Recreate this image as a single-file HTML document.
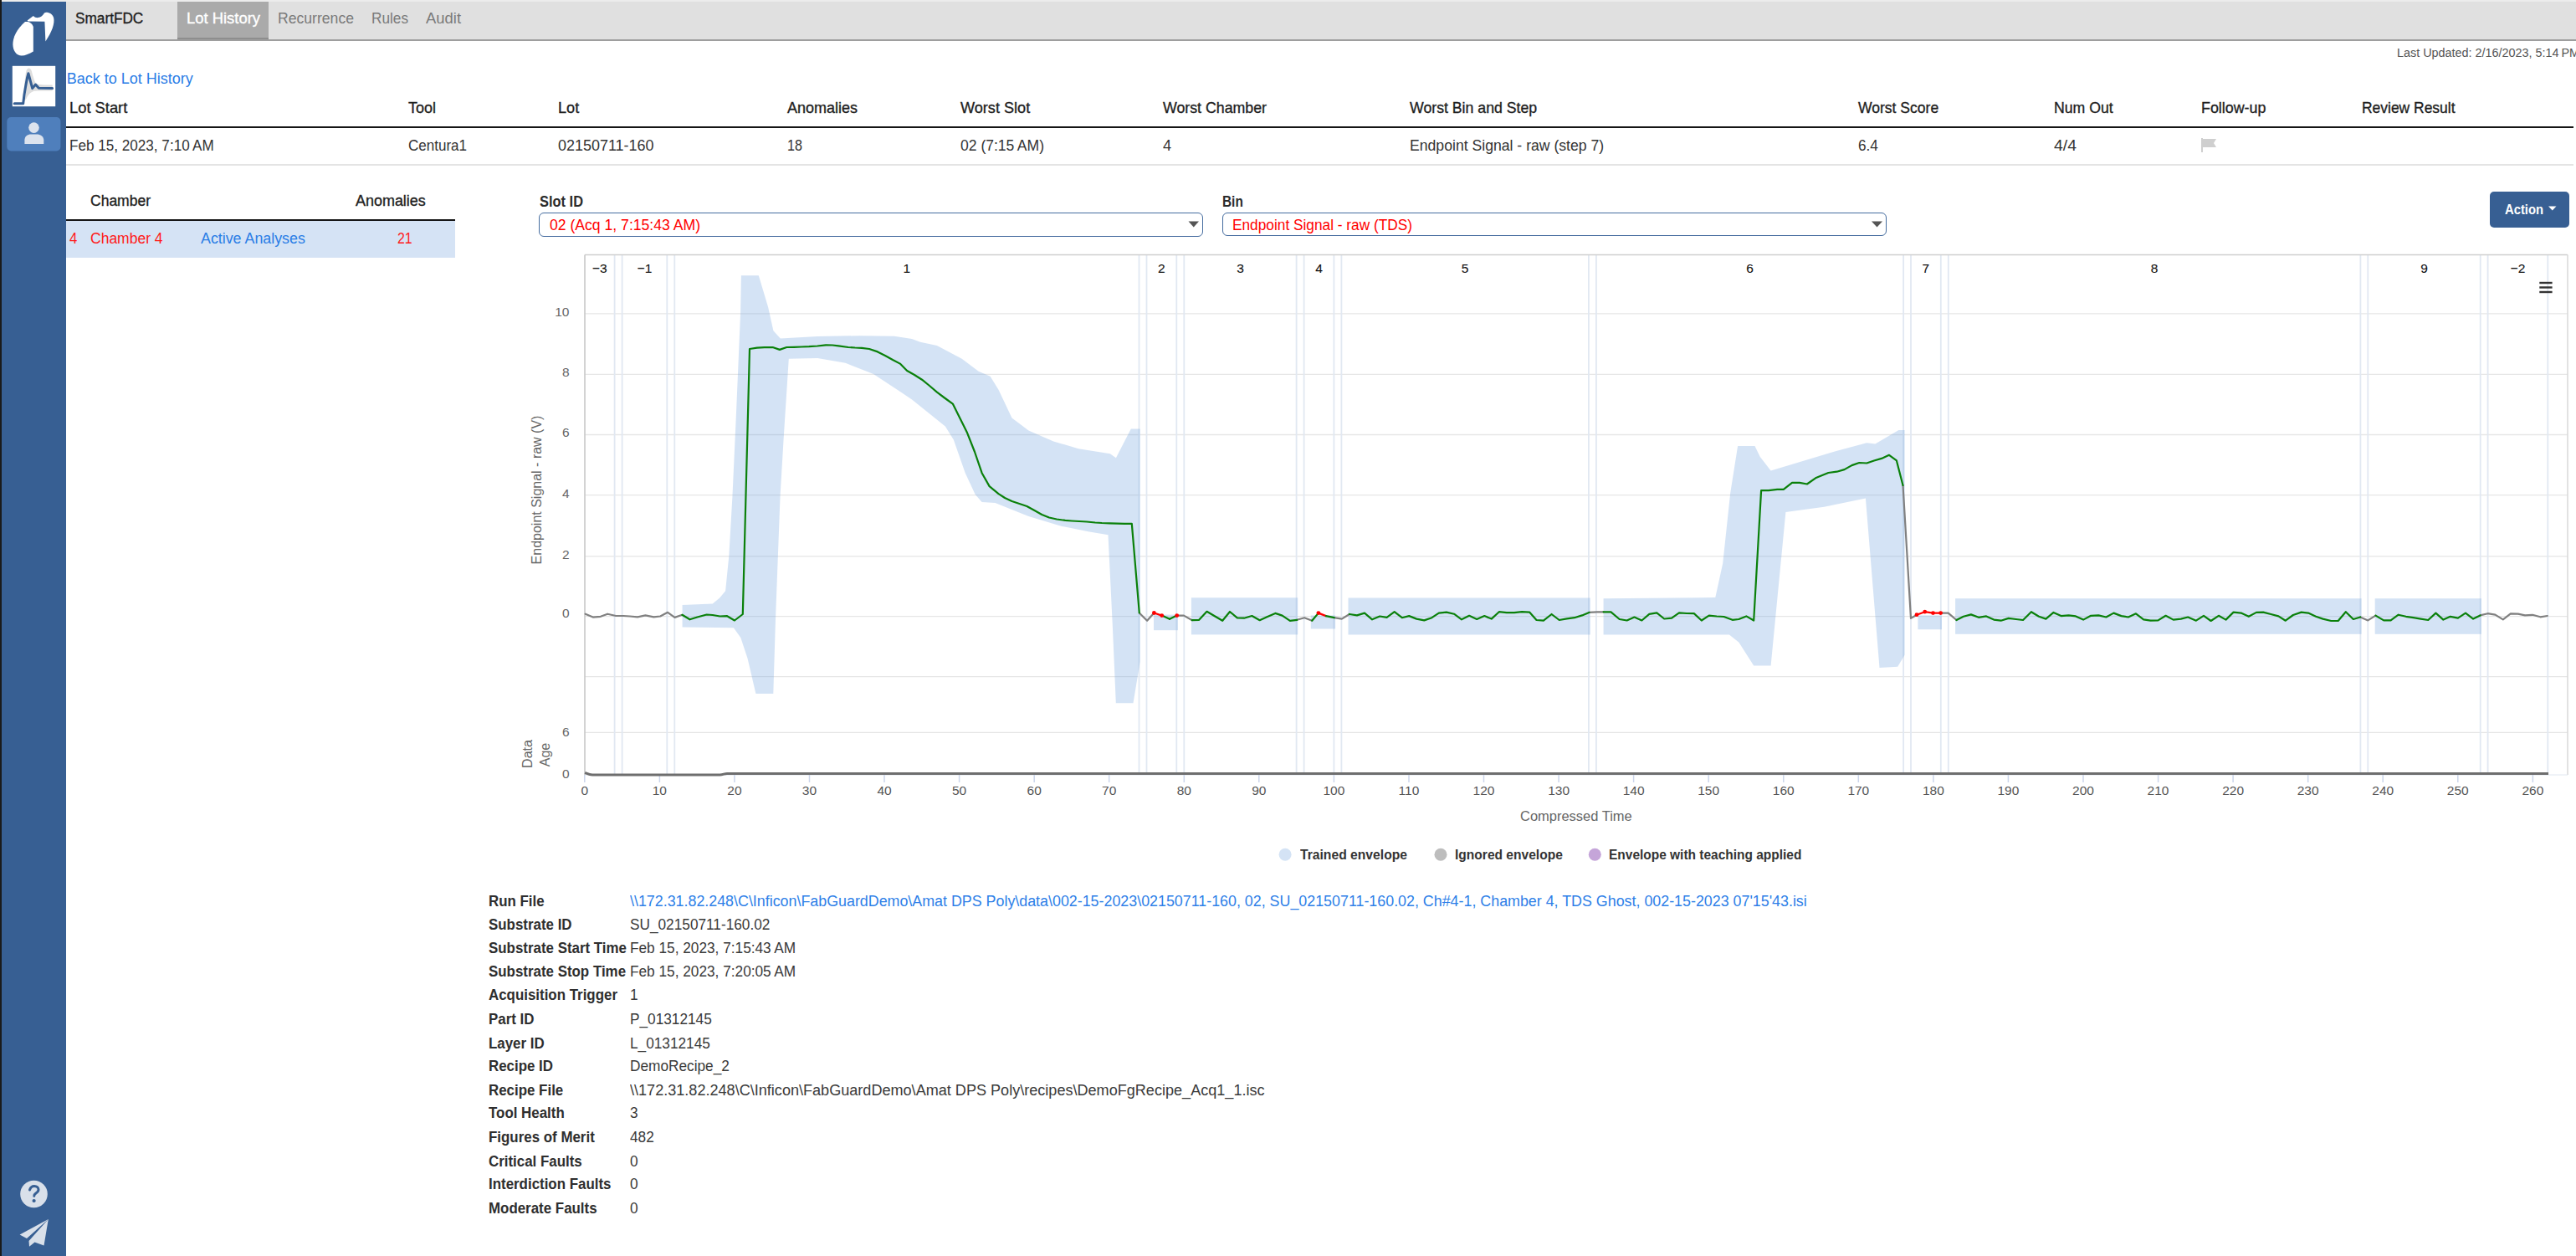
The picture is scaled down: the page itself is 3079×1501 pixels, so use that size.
<!DOCTYPE html>
<html><head><meta charset="utf-8"><title>SmartFDC</title>
<style>
html,body{margin:0;padding:0;}
body{width:3079px;height:1501px;overflow:hidden;position:relative;background:#fff;font-family:"Liberation Sans", sans-serif;}
.t{position:absolute;white-space:nowrap;transform-origin:0 0;}
.b{position:absolute;}
</style></head><body>
<div class="b" style="left:0;top:0;width:3079px;height:2px;background:#ececec"></div>
<div class="b" style="left:0;top:0;width:2px;height:1501px;background:#1a1a1a"></div>
<div class="b" style="left:2px;top:2px;width:77px;height:1499px;background:#375f93"></div>
<div class="b" style="left:79px;top:2px;width:3000px;height:45px;background:#e0e0e0"></div>
<div class="b" style="left:79px;top:46.5px;width:3000px;height:2px;background:#9e9e9e"></div>
<div class="b" style="left:212px;top:2px;width:109px;height:45px;background:#aaaaaa"></div>
<div class="b" style="left:212px;top:45px;width:109px;height:2px;background:#8e8e8e"></div>
<div class="b" style="left:79px;top:151px;width:2997px;height:1.7px;background:#151515"></div>
<div class="b" style="left:79px;top:196px;width:2997px;height:1.5px;background:#e4e4e4"></div>
<div class="b" style="left:79px;top:262.2px;width:465px;height:1.7px;background:#151515"></div>
<div class="b" style="left:79px;top:264px;width:465px;height:43.6px;background:#d5e3f5"></div>
<div class="b" style="left:643.8px;top:254.2px;width:794.6px;height:28.4px;box-sizing:border-box;border:1.6px solid #456c9f;border-radius:6px"></div>
<div class="b" style="left:1460.6px;top:254.4px;width:794.6px;height:28px;box-sizing:border-box;border:1.6px solid #456c9f;border-radius:6px"></div>
<div class="b" style="left:2976px;top:228.5px;width:95.3px;height:43px;background:#375f93;border-radius:5px"></div>
<svg class="b" style="left:0;top:0" width="80" height="1501" viewBox="0 0 80 1501">
<path d="M30,26.1 C34,25.3 38,27 39.8,32 L39.8,61.6 C35,64.5 30,66.6 25.8,66.6 C20,66.6 15.4,61 15.4,53 C15.4,45 19.5,35.5 30,26.1 Z" fill="#fff"/>
<path d="M32.6,24.6 L39.8,19 C41.5,20.8 43.5,21.3 45.8,21.1 C48.5,20.8 51,18.5 53,15.4 C54,14.8 55,14.6 56,14.7 C60,15 63.2,17.5 64.2,21.5 C65.5,28 62.5,37.5 54.4,49.4 L53.4,25.8 L33.7,25.6 Z" fill="#fff"/>
<rect x="14.8" y="78.8" width="51.4" height="48.4" fill="#fff"/>
<path d="M27,123 C28.5,112 29.5,92 31.5,84.5 C32.8,80.5 36,80.5 37.5,84 C39,89 40.5,96 43,99.8 C46,101.5 52,101.6 62.8,101.6 L62.8,108.6 C52,108.6 45,108.3 41.5,108.8 C37.5,109.5 34.5,112 31.5,118 Z" fill="#dedede"/>
<polyline points="17.2,123.7 27.7,123.7 29,113 30.5,104 32.5,93 33.9,87.7 38.7,105.6 42.5,101 46.3,105.3 62.6,105.6" fill="none" stroke="#375f93" stroke-width="3" stroke-linejoin="round" stroke-linecap="round"/>
<rect x="8.3" y="140" width="64.1" height="40.5" rx="5" fill="#4f7fbc"/>
<circle cx="40.5" cy="152.6" r="6.3" fill="#dce3ee"/>
<path d="M29.4,172 L29.4,167.5 C29.4,163 33,160.5 37,160.5 L44,160.5 C48,160.5 52.3,163 52.3,167.5 L52.3,172 Z" fill="#dce3ee"/>
<circle cx="40.5" cy="1427" r="16.3" fill="#d9e0ea"/>
<path d="M35.5,1422 C36.5,1418.8 38.5,1417.5 41,1417.5 C44,1417.5 46,1419.3 46,1421.8 C46,1424.3 43.8,1425.5 42.3,1426.5 C41.3,1427.2 40.8,1428 40.8,1429.3" fill="none" stroke="#375f93" stroke-width="3" stroke-linecap="round"/>
<circle cx="40.6" cy="1435" r="2.1" fill="#375f93"/>
<path d="M57.8,1457 L23.6,1475.5 L32,1480 Z" fill="#d9e0ea"/>
<path d="M57.8,1457 L34.5,1483 L35,1489.8 L41.5,1484.5 L52.5,1488.5 Z" fill="#d9e0ea"/>
</svg>
<svg class="b" style="left:0;top:0" width="3079" height="1501" viewBox="0 0 3079 1501">
<line x1="699" y1="374.9" x2="3069" y2="374.9" stroke="#e6e6e6" stroke-width="1.3"/>
<line x1="699" y1="447.3" x2="3069" y2="447.3" stroke="#e6e6e6" stroke-width="1.3"/>
<line x1="699" y1="519.5" x2="3069" y2="519.5" stroke="#e6e6e6" stroke-width="1.3"/>
<line x1="699" y1="591.7" x2="3069" y2="591.7" stroke="#e6e6e6" stroke-width="1.3"/>
<line x1="699" y1="664.8" x2="3069" y2="664.8" stroke="#e6e6e6" stroke-width="1.3"/>
<line x1="699" y1="736.6" x2="3069" y2="736.6" stroke="#e6e6e6" stroke-width="1.3"/>
<line x1="699" y1="808.7" x2="3069" y2="808.7" stroke="#e6e6e6" stroke-width="1.3"/>
<line x1="699" y1="875.3" x2="3069" y2="875.3" stroke="#e6e6e6" stroke-width="1.3"/>
<line x1="734.6" y1="304.5" x2="734.6" y2="926" stroke="#e1e8f2" stroke-width="1.8"/>
<line x1="743.6" y1="304.5" x2="743.6" y2="926" stroke="#e1e8f2" stroke-width="1.8"/>
<line x1="797.3" y1="304.5" x2="797.3" y2="926" stroke="#e1e8f2" stroke-width="1.8"/>
<line x1="806.3" y1="304.5" x2="806.3" y2="926" stroke="#e1e8f2" stroke-width="1.8"/>
<line x1="1361.5" y1="304.5" x2="1361.5" y2="926" stroke="#e1e8f2" stroke-width="1.8"/>
<line x1="1370.5" y1="304.5" x2="1370.5" y2="926" stroke="#e1e8f2" stroke-width="1.8"/>
<line x1="1406.3" y1="304.5" x2="1406.3" y2="926" stroke="#e1e8f2" stroke-width="1.8"/>
<line x1="1415.3" y1="304.5" x2="1415.3" y2="926" stroke="#e1e8f2" stroke-width="1.8"/>
<line x1="1549.6" y1="304.5" x2="1549.6" y2="926" stroke="#e1e8f2" stroke-width="1.8"/>
<line x1="1558.6" y1="304.5" x2="1558.6" y2="926" stroke="#e1e8f2" stroke-width="1.8"/>
<line x1="1594.4" y1="304.5" x2="1594.4" y2="926" stroke="#e1e8f2" stroke-width="1.8"/>
<line x1="1603.4" y1="304.5" x2="1603.4" y2="926" stroke="#e1e8f2" stroke-width="1.8"/>
<line x1="1898.9" y1="304.5" x2="1898.9" y2="926" stroke="#e1e8f2" stroke-width="1.8"/>
<line x1="1907.9" y1="304.5" x2="1907.9" y2="926" stroke="#e1e8f2" stroke-width="1.8"/>
<line x1="2275.1" y1="304.5" x2="2275.1" y2="926" stroke="#e1e8f2" stroke-width="1.8"/>
<line x1="2284.0" y1="304.5" x2="2284.0" y2="926" stroke="#e1e8f2" stroke-width="1.8"/>
<line x1="2319.8" y1="304.5" x2="2319.8" y2="926" stroke="#e1e8f2" stroke-width="1.8"/>
<line x1="2328.8" y1="304.5" x2="2328.8" y2="926" stroke="#e1e8f2" stroke-width="1.8"/>
<line x1="2821.4" y1="304.5" x2="2821.4" y2="926" stroke="#e1e8f2" stroke-width="1.8"/>
<line x1="2830.3" y1="304.5" x2="2830.3" y2="926" stroke="#e1e8f2" stroke-width="1.8"/>
<line x1="2964.7" y1="304.5" x2="2964.7" y2="926" stroke="#e1e8f2" stroke-width="1.8"/>
<line x1="2973.6" y1="304.5" x2="2973.6" y2="926" stroke="#e1e8f2" stroke-width="1.8"/>
<line x1="3045.3" y1="304.5" x2="3045.3" y2="926" stroke="#e1e8f2" stroke-width="1.8"/>
<polygon points="815.6,723.0 851.8,721.6 860.2,714.6 867.1,706.3 871.3,664.5 875.5,592.0 879.7,500.0 885.1,373.6 885.9,329.2 906.8,329.2 918.1,366.9 924.4,395.3 932.8,404.5 977.1,402.0 1027.3,401.2 1069.0,401.7 1090.0,404.9 1100.0,408.7 1119.9,412.9 1149.7,428.8 1169.6,443.8 1183.6,449.7 1193.5,465.7 1209.5,499.5 1229.4,514.4 1259.2,527.4 1289.1,536.3 1326.9,542.3 1333.9,547.3 1351.8,512.4 1362.7,512.4 1362.7,790.5 1354.5,840.2 1333.8,840.2 1329.7,745.0 1324.5,639.3 1300.7,635.2 1280.0,631.0 1269.2,628.9 1229.4,617.0 1189.5,601.0 1173.6,600.0 1165.7,591.1 1153.7,565.2 1139.8,525.4 1129.8,509.4 1090.0,477.6 1077.4,468.9 1044.0,447.1 1010.5,433.8 977.1,427.9 942.8,428.7 936.9,520.0 932.6,592.0 927.1,737.0 924.3,828.9 903.4,828.9 893.6,787.1 885.3,762.0 876.9,750.3 815.6,749.5" fill="#70a2de" fill-opacity="0.3"/>
<polygon points="1916.6,715.3 2050.3,714.0 2059.2,673.2 2068.2,589.2 2077.1,533.1 2097.5,533.1 2103.8,545.9 2116.6,562.4 2154.8,551.0 2193.0,539.5 2231.2,529.3 2241.4,530.6 2269.4,514.0 2276.6,514.0 2276.6,782.8 2268.2,796.8 2246.5,798.1 2229.9,595.5 2180.3,605.7 2134.4,612.1 2116.6,795.5 2096.2,795.5 2078.3,767.5 2066.9,758.6 1916.6,758.6" fill="#70a2de" fill-opacity="0.3"/>
<rect x="1379" y="734.6" width="29.0" height="18.6" fill="#70a2de" fill-opacity="0.3"/>
<rect x="1423.9" y="714.3" width="127.3" height="44.1" fill="#70a2de" fill-opacity="0.3"/>
<rect x="1566.8" y="735.4" width="29.3" height="16.1" fill="#70a2de" fill-opacity="0.3"/>
<rect x="1611.5" y="714.5" width="289.3" height="44.0" fill="#70a2de" fill-opacity="0.3"/>
<rect x="2292.4" y="735.4" width="28.6" height="16.8" fill="#70a2de" fill-opacity="0.3"/>
<rect x="2337.1" y="715.2" width="485.5" height="42.6" fill="#70a2de" fill-opacity="0.3"/>
<rect x="2838.7" y="715.2" width="127.2" height="42.6" fill="#70a2de" fill-opacity="0.3"/>
<line x1="699" y1="304.5" x2="3069" y2="304.5" stroke="#d0d0d0" stroke-width="1.5"/>
<line x1="3069" y1="304.5" x2="3069" y2="926" stroke="#d8d8d8" stroke-width="1.5"/>
<line x1="699" y1="926" x2="3069" y2="926" stroke="#e0e6f0" stroke-width="1"/>
<line x1="699" y1="304.5" x2="699" y2="926" stroke="#c8c8c8" stroke-width="1.6"/>
<line x1="698.8" y1="926" x2="698.8" y2="935" stroke="#ccd6eb" stroke-width="1.5"/>
<line x1="788.4" y1="926" x2="788.4" y2="935" stroke="#ccd6eb" stroke-width="1.5"/>
<line x1="877.9" y1="926" x2="877.9" y2="935" stroke="#ccd6eb" stroke-width="1.5"/>
<line x1="967.5" y1="926" x2="967.5" y2="935" stroke="#ccd6eb" stroke-width="1.5"/>
<line x1="1057.0" y1="926" x2="1057.0" y2="935" stroke="#ccd6eb" stroke-width="1.5"/>
<line x1="1146.6" y1="926" x2="1146.6" y2="935" stroke="#ccd6eb" stroke-width="1.5"/>
<line x1="1236.2" y1="926" x2="1236.2" y2="935" stroke="#ccd6eb" stroke-width="1.5"/>
<line x1="1325.7" y1="926" x2="1325.7" y2="935" stroke="#ccd6eb" stroke-width="1.5"/>
<line x1="1415.3" y1="926" x2="1415.3" y2="935" stroke="#ccd6eb" stroke-width="1.5"/>
<line x1="1504.8" y1="926" x2="1504.8" y2="935" stroke="#ccd6eb" stroke-width="1.5"/>
<line x1="1594.4" y1="926" x2="1594.4" y2="935" stroke="#ccd6eb" stroke-width="1.5"/>
<line x1="1684.0" y1="926" x2="1684.0" y2="935" stroke="#ccd6eb" stroke-width="1.5"/>
<line x1="1773.5" y1="926" x2="1773.5" y2="935" stroke="#ccd6eb" stroke-width="1.5"/>
<line x1="1863.1" y1="926" x2="1863.1" y2="935" stroke="#ccd6eb" stroke-width="1.5"/>
<line x1="1952.6" y1="926" x2="1952.6" y2="935" stroke="#ccd6eb" stroke-width="1.5"/>
<line x1="2042.2" y1="926" x2="2042.2" y2="935" stroke="#ccd6eb" stroke-width="1.5"/>
<line x1="2131.8" y1="926" x2="2131.8" y2="935" stroke="#ccd6eb" stroke-width="1.5"/>
<line x1="2221.3" y1="926" x2="2221.3" y2="935" stroke="#ccd6eb" stroke-width="1.5"/>
<line x1="2310.9" y1="926" x2="2310.9" y2="935" stroke="#ccd6eb" stroke-width="1.5"/>
<line x1="2400.4" y1="926" x2="2400.4" y2="935" stroke="#ccd6eb" stroke-width="1.5"/>
<line x1="2490.0" y1="926" x2="2490.0" y2="935" stroke="#ccd6eb" stroke-width="1.5"/>
<line x1="2579.6" y1="926" x2="2579.6" y2="935" stroke="#ccd6eb" stroke-width="1.5"/>
<line x1="2669.1" y1="926" x2="2669.1" y2="935" stroke="#ccd6eb" stroke-width="1.5"/>
<line x1="2758.7" y1="926" x2="2758.7" y2="935" stroke="#ccd6eb" stroke-width="1.5"/>
<line x1="2848.2" y1="926" x2="2848.2" y2="935" stroke="#ccd6eb" stroke-width="1.5"/>
<line x1="2937.8" y1="926" x2="2937.8" y2="935" stroke="#ccd6eb" stroke-width="1.5"/>
<line x1="3027.4" y1="926" x2="3027.4" y2="935" stroke="#ccd6eb" stroke-width="1.5"/>
<polyline points="699.7,733.7 708.7,737.6 717.9,736.8 726.2,733.7 736.2,736.0 745.2,736.0 752.9,736.5 761.9,737.3 771.4,735.4 781.4,737.3 789.2,736.5 798.1,731.8 806.5,737.9 815.4,734.8" fill="none" stroke="#808080" stroke-width="2.2" stroke-linejoin="round" stroke-linecap="round"/>
<polyline points="1361.8,732.5 1371.1,741.8 1379.4,732.5" fill="none" stroke="#808080" stroke-width="2.2" stroke-linejoin="round" stroke-linecap="round"/>
<polyline points="1406.7,735.6 1415.0,735.6 1424.9,741.2" fill="none" stroke="#808080" stroke-width="2.2" stroke-linejoin="round" stroke-linecap="round"/>
<polyline points="1550.2,740.8 1559.1,738.2 1568.2,741.7" fill="none" stroke="#808080" stroke-width="2.2" stroke-linejoin="round" stroke-linecap="round"/>
<polyline points="1594.7,738.2 1603.8,739.6 1612.9,734.0" fill="none" stroke="#808080" stroke-width="2.2" stroke-linejoin="round" stroke-linecap="round"/>
<polyline points="1899.4,731.9 1908.9,731.3 1916.6,731.3" fill="none" stroke="#808080" stroke-width="2.2" stroke-linejoin="round" stroke-linecap="round"/>
<polyline points="2274.5,580.0 2284.0,738.9 2291.0,734.7" fill="none" stroke="#808080" stroke-width="2.2" stroke-linejoin="round" stroke-linecap="round"/>
<polyline points="2319.6,732.6 2328.7,732.6 2338.5,741.0" fill="none" stroke="#808080" stroke-width="2.2" stroke-linejoin="round" stroke-linecap="round"/>
<polyline points="2821.2,737.5 2830.3,741.4 2839.5,735.6" fill="none" stroke="#808080" stroke-width="2.2" stroke-linejoin="round" stroke-linecap="round"/>
<polyline points="2964.5,735.4 2973.4,733.2 2982.4,734.6 2991.8,740.4 3000.8,733.4 3009.7,733.7 3018.0,735.4 3027.0,734.8 3036.4,737.3 3044.8,736.0" fill="none" stroke="#808080" stroke-width="2.2" stroke-linejoin="round" stroke-linecap="round"/>
<polyline points="815.4,734.8 824.5,740.3 833.5,737.5 844.6,734.5 851.8,735.0 860.5,736.5 869.1,736.2 878.0,741.5 887.8,734.0 896.0,417.0 904.8,415.7 913.7,415.2 923.6,415.0 931.9,417.9 940.3,415.0 949.0,414.8 958.0,414.5 967.0,414.2 977.0,413.5 987.1,412.4 995.0,412.5 1002.2,413.4 1013.9,415.0 1022.0,415.5 1030.0,415.8 1039.0,417.0 1049.0,420.4 1058.0,425.0 1067.0,430.0 1075.8,434.6 1084.1,443.0 1093.0,448.0 1102.0,453.7 1111.0,461.0 1119.9,468.6 1129.0,475.5 1138.8,482.6 1147.0,499.0 1155.7,516.4 1165.0,540.0 1173.6,565.2 1182.6,581.1 1193.5,590.1 1201.0,595.0 1209.5,599.0 1218.5,602.0 1227.4,605.0 1236.5,610.0 1245.3,615.0 1254.0,618.5 1263.0,620.5 1273.2,621.9 1281.0,622.5 1290.0,623.0 1299.0,623.5 1309.0,624.5 1317.0,625.0 1326.0,625.3 1335.0,625.6 1344.0,625.8 1352.8,625.9 1361.8,732.5" fill="none" stroke="#0a800a" stroke-width="2.2" stroke-linejoin="round" stroke-linecap="round"/>
<polyline points="1424.9,741.2 1433.2,740.8 1442.5,730.8 1451.8,736.3 1461.2,741.8 1470.0,731.0 1478.8,738.3 1487.0,738.7 1496.4,736.0 1505.7,741.2 1515.0,737.0 1524.3,732.9 1532.6,735.6 1541.9,741.8 1550.2,740.8" fill="none" stroke="#0a800a" stroke-width="2.2" stroke-linejoin="round" stroke-linecap="round"/>
<polyline points="1612.9,734.0 1622.0,735.4 1631.0,732.6 1640.1,740.3 1649.2,736.5 1657.6,737.9 1666.7,731.2 1675.8,738.2 1684.2,736.1 1693.2,739.6 1702.3,741.4 1711.4,738.2 1719.8,732.6 1728.9,731.6 1738.0,733.7 1747.0,740.3 1756.1,735.8 1765.2,740.0 1774.3,736.1 1782.7,739.6 1791.8,731.2 1800.8,732.2 1809.9,732.2 1819.0,731.2 1828.1,731.6 1836.5,741.0 1844.9,741.7 1854.6,734.0 1863.7,741.0 1872.8,739.3 1881.9,738.2 1891.0,735.4 1899.4,731.9" fill="none" stroke="#0a800a" stroke-width="2.2" stroke-linejoin="round" stroke-linecap="round"/>
<polyline points="1916.6,731.3 1925.5,731.3 1935.7,740.0 1944.6,741.5 1953.5,737.5 1962.4,741.5 1971.3,733.9 1980.3,732.4 1989.2,739.5 1998.1,738.7 2007.0,732.4 2016.0,733.0 2024.8,733.1 2033.8,741.5 2042.7,735.7 2051.9,736.5 2060.5,737.0 2070.7,740.8 2078.3,740.0 2087.3,736.4 2096.2,741.5 2105.1,586.1 2114.0,586.1 2124.2,584.8 2131.8,584.8 2142.0,576.9 2151.0,576.9 2159.9,578.5 2170.1,571.3 2178.0,568.0 2185.4,565.0 2195.5,563.7 2204.5,561.1 2213.4,556.1 2222.3,553.0 2231.2,553.5 2240.0,550.5 2249.0,547.9 2258.0,543.8 2266.9,550.4 2274.5,580.0" fill="none" stroke="#0a800a" stroke-width="2.2" stroke-linejoin="round" stroke-linecap="round"/>
<polyline points="2338.5,741.0 2346.9,736.8 2355.9,734.4 2365.0,737.8 2374.1,736.4 2383.2,740.6 2391.6,741.7 2400.7,738.9 2409.7,740.0 2418.1,741.0 2427.9,731.2 2437.0,736.8 2445.4,739.6 2454.5,731.9 2463.5,736.1 2472.6,735.4 2481.0,736.4 2490.1,740.6 2499.2,735.8 2508.3,735.4 2517.4,737.5 2526.4,732.6 2535.5,736.1 2543.9,737.5 2553.0,733.3 2562.1,740.3 2570.5,741.7 2579.5,741.4 2588.6,735.8 2597.7,740.6 2606.8,739.6 2615.2,737.5 2624.9,741.7 2634.0,735.8 2642.6,742.0 2651.9,735.8 2660.5,740.6 2669.6,731.6 2678.7,732.6 2687.8,736.8 2696.9,731.9 2705.2,731.6 2714.3,734.0 2723.4,736.4 2731.8,741.7 2740.9,735.0 2750.7,731.6 2759.0,732.6 2768.1,736.8 2776.5,739.6 2786.3,742.0 2794.7,742.0 2803.8,731.2 2812.8,740.0 2821.2,737.5" fill="none" stroke="#0a800a" stroke-width="2.2" stroke-linejoin="round" stroke-linecap="round"/>
<polyline points="2839.5,735.6 2849.2,741.4 2857.6,741.4 2866.7,734.7 2875.7,736.8 2884.7,738.2 2893.6,739.6 2902.3,741.0 2911.4,732.6 2920.4,740.6 2928.8,736.8 2937.9,738.6 2947.0,732.6 2956.1,739.6 2964.5,735.4" fill="none" stroke="#0a800a" stroke-width="2.2" stroke-linejoin="round" stroke-linecap="round"/>
<polyline points="1379.4,732.5 1388.7,735.6" fill="none" stroke="#ff0000" stroke-width="2.2" stroke-linejoin="round" stroke-linecap="round"/>
<polyline points="1388.7,735.6 1398.0,739.8" fill="none" stroke="#0a800a" stroke-width="2.2" stroke-linejoin="round" stroke-linecap="round"/>
<polyline points="1398.0,739.8 1406.7,735.6" fill="none" stroke="#0a800a" stroke-width="2.2" stroke-linejoin="round" stroke-linecap="round"/>
<polyline points="1568.2,741.7 1575.9,732.6" fill="none" stroke="#0a800a" stroke-width="2.2" stroke-linejoin="round" stroke-linecap="round"/>
<polyline points="1575.9,732.6 1584.9,736.1" fill="none" stroke="#ff0000" stroke-width="2.2" stroke-linejoin="round" stroke-linecap="round"/>
<polyline points="1584.9,736.1 1594.7,738.2" fill="none" stroke="#0a800a" stroke-width="2.2" stroke-linejoin="round" stroke-linecap="round"/>
<polyline points="2291.0,734.7 2300.7,731.2 2310.5,732.6 2319.6,732.6" fill="none" stroke="#ff0000" stroke-width="2.2" stroke-linejoin="round" stroke-linecap="round"/>
<circle cx="1379.4" cy="732.5" r="2.4" fill="#ff0000"/>
<circle cx="1388.7" cy="735.6" r="2.4" fill="#ff0000"/>
<circle cx="1406.7" cy="735.6" r="2.4" fill="#ff0000"/>
<circle cx="1575.9" cy="732.6" r="2.4" fill="#ff0000"/>
<circle cx="2291" cy="734.7" r="2.4" fill="#ff0000"/>
<circle cx="2300.7" cy="731.2" r="2.4" fill="#ff0000"/>
<circle cx="2310.5" cy="732.6" r="2.4" fill="#ff0000"/>
<circle cx="2319.6" cy="732.6" r="2.4" fill="#ff0000"/>
<path d="M699.2,923.3 C702,924.5 705,926 708,926 L860.6,926 C864,926 866,924.4 869,924.4 L3046,924.4" fill="none" stroke="#6e6e6e" stroke-width="3"/>
<rect x="3035.3" y="336.8" width="15.3" height="2.4" fill="#333"/>
<rect x="3035.3" y="342.3" width="15.3" height="2.4" fill="#333"/>
<rect x="3035.3" y="347.8" width="15.3" height="2.4" fill="#333"/>
<circle cx="1536.1" cy="1021.2" r="7.5" fill="#d4e3f5"/>
<circle cx="1722" cy="1021.2" r="7.5" fill="#bdbdbd"/>
<circle cx="1906.3" cy="1021.2" r="7.5" fill="#c5a5d9"/>
<polygon points="1420.5,264.5 1433,264.5 1426.75,271.5" fill="#555"/>
<polygon points="2237,264.5 2250,264.5 2243.5,271.5" fill="#555"/>
<polygon points="3046,246.5 3055.5,246.5 3050.75,251.5" fill="#fff"/>
<path d="M2631,165 L2633,165 L2633,182 L2631,182 Z M2633,166 L2649,166 L2646,171 L2649,176 L2633,176 Z" fill="#cfcfcf"/>
<text x="0" y="0" transform="translate(646.5,585.5) rotate(-90)" text-anchor="middle" font-family="Liberation Sans" font-size="16" fill="#666">Endpoint Signal - raw (V)</text>
<text x="0" y="0" transform="translate(635.8,901) rotate(-90)" text-anchor="middle" font-family="Liberation Sans" font-size="16" fill="#666">Data</text>
<text x="0" y="0" transform="translate(656.6,902) rotate(-90)" text-anchor="middle" font-family="Liberation Sans" font-size="16" fill="#666">Age</text>
</svg>
<div class="t" style="left:89.50px;top:13.90px;font-size:17.6px;line-height:17.6px;color:#1f1f1f;-webkit-text-stroke:0.35px #1f1f1f;transform:scaleX(0.9784);">SmartFDC</div><div class="t" style="left:223.00px;top:13.34px;font-size:18.5px;line-height:18.5px;color:#ffffff;-webkit-text-stroke:0.35px #ffffff;transform:scaleX(0.9952);">Lot History</div><div class="t" style="left:332.00px;top:13.34px;font-size:18.5px;line-height:18.5px;color:#7a7a7a;transform:scaleX(0.9515);">Recurrence</div><div class="t" style="left:444.00px;top:13.34px;font-size:18.5px;line-height:18.5px;color:#7a7a7a;transform:scaleX(0.9300);">Rules</div><div class="t" style="left:509.00px;top:13.34px;font-size:18.5px;line-height:18.5px;color:#7a7a7a;transform:scaleX(0.9959);">Audit</div><div class="t" style="left:2864.70px;top:54.68px;font-size:15.5px;line-height:15.5px;color:#555;transform:scaleX(0.9280);">Last Updated: 2/16/2023, 5:14 PM</div><div class="t" style="left:79.70px;top:84.56px;font-size:18px;line-height:18px;color:#2a7de6;">Back to Lot History</div><div class="t" style="left:83.20px;top:119.64px;font-size:18.5px;line-height:18.5px;color:#1f1f1f;-webkit-text-stroke:0.35px #1f1f1f;transform:scaleX(0.9909);">Lot Start</div><div class="t" style="left:488.30px;top:119.64px;font-size:18.5px;line-height:18.5px;color:#1f1f1f;-webkit-text-stroke:0.35px #1f1f1f;transform:scaleX(0.9719);">Tool</div><div class="t" style="left:666.80px;top:119.64px;font-size:18.5px;line-height:18.5px;color:#1f1f1f;-webkit-text-stroke:0.35px #1f1f1f;transform:scaleX(0.9798);">Lot</div><div class="t" style="left:941.40px;top:119.64px;font-size:18.5px;line-height:18.5px;color:#1f1f1f;-webkit-text-stroke:0.35px #1f1f1f;transform:scaleX(0.9723);">Anomalies</div><div class="t" style="left:1147.50px;top:119.64px;font-size:18.5px;line-height:18.5px;color:#1f1f1f;-webkit-text-stroke:0.35px #1f1f1f;transform:scaleX(0.9790);">Worst Slot</div><div class="t" style="left:1390.00px;top:119.64px;font-size:18.5px;line-height:18.5px;color:#1f1f1f;-webkit-text-stroke:0.35px #1f1f1f;transform:scaleX(0.9597);">Worst Chamber</div><div class="t" style="left:1684.80px;top:119.64px;font-size:18.5px;line-height:18.5px;color:#1f1f1f;-webkit-text-stroke:0.35px #1f1f1f;transform:scaleX(0.9569);">Worst Bin and Step</div><div class="t" style="left:2220.80px;top:119.64px;font-size:18.5px;line-height:18.5px;color:#1f1f1f;-webkit-text-stroke:0.35px #1f1f1f;transform:scaleX(0.9484);">Worst Score</div><div class="t" style="left:2455.30px;top:119.64px;font-size:18.5px;line-height:18.5px;color:#1f1f1f;-webkit-text-stroke:0.35px #1f1f1f;transform:scaleX(0.9550);">Num Out</div><div class="t" style="left:2630.60px;top:119.64px;font-size:18.5px;line-height:18.5px;color:#1f1f1f;-webkit-text-stroke:0.35px #1f1f1f;transform:scaleX(0.9650);">Follow-up</div><div class="t" style="left:2822.50px;top:119.64px;font-size:18.5px;line-height:18.5px;color:#1f1f1f;-webkit-text-stroke:0.35px #1f1f1f;transform:scaleX(0.9429);">Review Result</div><div class="t" style="left:83.20px;top:165.14px;font-size:18.5px;line-height:18.5px;color:#333;transform:scaleX(0.9251);">Feb 15, 2023, 7:10 AM</div><div class="t" style="left:488.30px;top:165.14px;font-size:18.5px;line-height:18.5px;color:#333;transform:scaleX(0.9197);">Centura1</div><div class="t" style="left:666.80px;top:165.14px;font-size:18.5px;line-height:18.5px;color:#333;transform:scaleX(0.9706);">02150711-160</div><div class="t" style="left:941.40px;top:165.14px;font-size:18.5px;line-height:18.5px;color:#333;transform:scaleX(0.8699);">18</div><div class="t" style="left:1147.90px;top:165.14px;font-size:18.5px;line-height:18.5px;color:#333;transform:scaleX(0.9479);">02 (7:15 AM)</div><div class="t" style="left:1389.70px;top:165.14px;font-size:18.5px;line-height:18.5px;color:#333;transform:scaleX(0.9809);">4</div><div class="t" style="left:1684.80px;top:165.14px;font-size:18.5px;line-height:18.5px;color:#333;transform:scaleX(0.9527);">Endpoint Signal - raw (step 7)</div><div class="t" style="left:2220.80px;top:165.14px;font-size:18.5px;line-height:18.5px;color:#333;transform:scaleX(0.9293);">6.4</div><div class="t" style="left:2455.30px;top:165.14px;font-size:18.5px;line-height:18.5px;color:#333;transform:scaleX(1.0459);">4/4</div><div class="t" style="left:108.20px;top:230.86px;font-size:18px;line-height:18px;color:#1f1f1f;-webkit-text-stroke:0.35px #1f1f1f;transform:scaleX(0.9726);">Chamber</div><div class="t" style="left:425.30px;top:230.86px;font-size:18px;line-height:18px;color:#1f1f1f;-webkit-text-stroke:0.35px #1f1f1f;transform:scaleX(0.9971);">Anomalies</div><div class="t" style="left:83.40px;top:275.56px;font-size:18px;line-height:18px;color:#ff1a1a;transform:scaleX(0.9285);">4</div><div class="t" style="left:107.60px;top:275.56px;font-size:18px;line-height:18px;color:#ff1a1a;transform:scaleX(0.9725);">Chamber 4</div><div class="t" style="left:239.90px;top:275.56px;font-size:18px;line-height:18px;color:#2a7de6;transform:scaleX(0.9900);">Active Analyses</div><div class="t" style="left:474.70px;top:275.56px;font-size:18px;line-height:18px;color:#ff1a1a;transform:scaleX(0.8836);">21</div><div class="t" style="left:644.75px;top:231.84px;font-size:18.5px;line-height:18.5px;color:#2b2b2b;font-weight:700;transform:scaleX(0.8875);">Slot ID</div><div class="t" style="left:1461.00px;top:231.74px;font-size:18.5px;line-height:18.5px;color:#2b2b2b;font-weight:700;transform:scaleX(0.8319);">Bin</div><div class="t" style="left:656.70px;top:260.01px;font-size:18.3px;line-height:18.3px;color:#ff0000;transform:scaleX(0.9626);">02 (Acq 1, 7:15:43 AM)</div><div class="t" style="left:1473.00px;top:260.01px;font-size:18.3px;line-height:18.3px;color:#ff0000;transform:scaleX(0.9447);">Endpoint Signal - raw (TDS)</div><div class="t" style="left:2994.00px;top:242.66px;font-size:16px;line-height:16px;color:#ffffff;font-weight:700;transform:scaleX(0.9240);">Action</div><div class="t" style="left:584.30px;top:1068.06px;font-size:18px;line-height:18px;color:#2e2e2e;font-weight:700;transform:scaleX(0.9389);">Run File</div><div class="t" style="left:752.90px;top:1068.06px;font-size:18px;line-height:18px;color:#2e7fe8;transform:scaleX(0.9915);">\\172.31.82.248\C\Inficon\FabGuardDemo\Amat DPS Poly\data\002-15-2023\02150711-160, 02, SU_02150711-160.02, Ch#4-1, Chamber 4, TDS Ghost, 002-15-2023 07'15'43.isi</div><div class="t" style="left:584.30px;top:1096.46px;font-size:18px;line-height:18px;color:#2e2e2e;font-weight:700;transform:scaleX(0.9389);">Substrate ID</div><div class="t" style="left:752.90px;top:1096.46px;font-size:18px;line-height:18px;color:#3a3a3a;transform:scaleX(0.9577);">SU_02150711-160.02</div><div class="t" style="left:584.30px;top:1123.96px;font-size:18px;line-height:18px;color:#2e2e2e;font-weight:700;transform:scaleX(0.9389);">Substrate Start Time</div><div class="t" style="left:752.90px;top:1123.96px;font-size:18px;line-height:18px;color:#3a3a3a;transform:scaleX(0.9577);">Feb 15, 2023, 7:15:43 AM</div><div class="t" style="left:584.30px;top:1152.36px;font-size:18px;line-height:18px;color:#2e2e2e;font-weight:700;transform:scaleX(0.9389);">Substrate Stop Time</div><div class="t" style="left:752.90px;top:1152.36px;font-size:18px;line-height:18px;color:#3a3a3a;transform:scaleX(0.9577);">Feb 15, 2023, 7:20:05 AM</div><div class="t" style="left:584.30px;top:1179.86px;font-size:18px;line-height:18px;color:#2e2e2e;font-weight:700;transform:scaleX(0.9389);">Acquisition Trigger</div><div class="t" style="left:752.90px;top:1179.86px;font-size:18px;line-height:18px;color:#3a3a3a;transform:scaleX(0.9577);">1</div><div class="t" style="left:584.30px;top:1208.96px;font-size:18px;line-height:18px;color:#2e2e2e;font-weight:700;transform:scaleX(0.9389);">Part ID</div><div class="t" style="left:752.90px;top:1208.96px;font-size:18px;line-height:18px;color:#3a3a3a;transform:scaleX(0.9577);">P_01312145</div><div class="t" style="left:584.30px;top:1237.66px;font-size:18px;line-height:18px;color:#2e2e2e;font-weight:700;transform:scaleX(0.9389);">Layer ID</div><div class="t" style="left:752.90px;top:1237.66px;font-size:18px;line-height:18px;color:#3a3a3a;transform:scaleX(0.9577);">L_01312145</div><div class="t" style="left:584.30px;top:1265.26px;font-size:18px;line-height:18px;color:#2e2e2e;font-weight:700;transform:scaleX(0.9389);">Recipe ID</div><div class="t" style="left:752.90px;top:1265.26px;font-size:18px;line-height:18px;color:#3a3a3a;transform:scaleX(0.9577);">DemoRecipe_2</div><div class="t" style="left:584.30px;top:1294.16px;font-size:18px;line-height:18px;color:#2e2e2e;font-weight:700;transform:scaleX(0.9389);">Recipe File</div><div class="t" style="left:752.90px;top:1294.16px;font-size:18px;line-height:18px;color:#3a3a3a;transform:scaleX(1.0042);">\\172.31.82.248\C\Inficon\FabGuardDemo\Amat DPS Poly\recipes\DemoFgRecipe_Acq1_1.isc</div><div class="t" style="left:584.30px;top:1321.16px;font-size:18px;line-height:18px;color:#2e2e2e;font-weight:700;transform:scaleX(0.9389);">Tool Health</div><div class="t" style="left:752.90px;top:1321.16px;font-size:18px;line-height:18px;color:#3a3a3a;transform:scaleX(0.9577);">3</div><div class="t" style="left:584.30px;top:1350.06px;font-size:18px;line-height:18px;color:#2e2e2e;font-weight:700;transform:scaleX(0.9389);">Figures of Merit</div><div class="t" style="left:752.90px;top:1350.06px;font-size:18px;line-height:18px;color:#3a3a3a;transform:scaleX(0.9577);">482</div><div class="t" style="left:584.30px;top:1378.76px;font-size:18px;line-height:18px;color:#2e2e2e;font-weight:700;transform:scaleX(0.9389);">Critical Faults</div><div class="t" style="left:752.90px;top:1378.76px;font-size:18px;line-height:18px;color:#3a3a3a;transform:scaleX(0.9577);">0</div><div class="t" style="left:584.30px;top:1405.96px;font-size:18px;line-height:18px;color:#2e2e2e;font-weight:700;transform:scaleX(0.9389);">Interdiction Faults</div><div class="t" style="left:752.90px;top:1405.96px;font-size:18px;line-height:18px;color:#3a3a3a;transform:scaleX(0.9577);">0</div><div class="t" style="left:584.30px;top:1434.56px;font-size:18px;line-height:18px;color:#2e2e2e;font-weight:700;transform:scaleX(0.9389);">Moderate Faults</div><div class="t" style="left:752.90px;top:1434.56px;font-size:18px;line-height:18px;color:#3a3a3a;transform:scaleX(0.9577);">0</div><div class="t" style="left:716.71px;top:313.08px;font-size:15.5px;line-height:15.5px;color:#111;-webkit-text-stroke:0.1px #111;transform:translateX(-50%);">−3</div><div class="t" style="left:770.45px;top:313.08px;font-size:15.5px;line-height:15.5px;color:#111;-webkit-text-stroke:0.1px #111;transform:translateX(-50%);">−1</div><div class="t" style="left:1083.91px;top:313.08px;font-size:15.5px;line-height:15.5px;color:#111;-webkit-text-stroke:0.1px #111;transform:translateX(-50%);">1</div><div class="t" style="left:1388.41px;top:313.08px;font-size:15.5px;line-height:15.5px;color:#111;-webkit-text-stroke:0.1px #111;transform:translateX(-50%);">2</div><div class="t" style="left:1482.45px;top:313.08px;font-size:15.5px;line-height:15.5px;color:#111;-webkit-text-stroke:0.1px #111;transform:translateX(-50%);">3</div><div class="t" style="left:1576.49px;top:313.08px;font-size:15.5px;line-height:15.5px;color:#111;-webkit-text-stroke:0.1px #111;transform:translateX(-50%);">4</div><div class="t" style="left:1751.13px;top:313.08px;font-size:15.5px;line-height:15.5px;color:#111;-webkit-text-stroke:0.1px #111;transform:translateX(-50%);">5</div><div class="t" style="left:2091.46px;top:313.08px;font-size:15.5px;line-height:15.5px;color:#111;-webkit-text-stroke:0.1px #111;transform:translateX(-50%);">6</div><div class="t" style="left:2301.92px;top:313.08px;font-size:15.5px;line-height:15.5px;color:#111;-webkit-text-stroke:0.1px #111;transform:translateX(-50%);">7</div><div class="t" style="left:2575.08px;top:313.08px;font-size:15.5px;line-height:15.5px;color:#111;-webkit-text-stroke:0.1px #111;transform:translateX(-50%);">8</div><div class="t" style="left:2897.50px;top:313.08px;font-size:15.5px;line-height:15.5px;color:#111;-webkit-text-stroke:0.1px #111;transform:translateX(-50%);">9</div><div class="t" style="left:3009.45px;top:313.08px;font-size:15.5px;line-height:15.5px;color:#111;-webkit-text-stroke:0.1px #111;transform:translateX(-50%);">−2</div><div class="t" style="left:680.50px;top:365.28px;font-size:15.5px;line-height:15.5px;color:#666;transform:translateX(-100%);">10</div><div class="t" style="left:680.50px;top:437.48px;font-size:15.5px;line-height:15.5px;color:#666;transform:translateX(-100%);">8</div><div class="t" style="left:680.50px;top:509.48px;font-size:15.5px;line-height:15.5px;color:#666;transform:translateX(-100%);">6</div><div class="t" style="left:680.50px;top:582.48px;font-size:15.5px;line-height:15.5px;color:#666;transform:translateX(-100%);">4</div><div class="t" style="left:680.50px;top:655.48px;font-size:15.5px;line-height:15.5px;color:#666;transform:translateX(-100%);">2</div><div class="t" style="left:680.50px;top:725.48px;font-size:15.5px;line-height:15.5px;color:#666;transform:translateX(-100%);">0</div><div class="t" style="left:680.50px;top:867.08px;font-size:15.5px;line-height:15.5px;color:#666;transform:translateX(-100%);">6</div><div class="t" style="left:680.50px;top:916.68px;font-size:15.5px;line-height:15.5px;color:#666;transform:translateX(-100%);">0</div><div class="t" style="left:698.80px;top:937.08px;font-size:15.5px;line-height:15.5px;color:#555;transform:translateX(-50%);">0</div><div class="t" style="left:788.36px;top:937.08px;font-size:15.5px;line-height:15.5px;color:#555;transform:translateX(-50%);">10</div><div class="t" style="left:877.92px;top:937.08px;font-size:15.5px;line-height:15.5px;color:#555;transform:translateX(-50%);">20</div><div class="t" style="left:967.48px;top:937.08px;font-size:15.5px;line-height:15.5px;color:#555;transform:translateX(-50%);">30</div><div class="t" style="left:1057.04px;top:937.08px;font-size:15.5px;line-height:15.5px;color:#555;transform:translateX(-50%);">40</div><div class="t" style="left:1146.60px;top:937.08px;font-size:15.5px;line-height:15.5px;color:#555;transform:translateX(-50%);">50</div><div class="t" style="left:1236.16px;top:937.08px;font-size:15.5px;line-height:15.5px;color:#555;transform:translateX(-50%);">60</div><div class="t" style="left:1325.72px;top:937.08px;font-size:15.5px;line-height:15.5px;color:#555;transform:translateX(-50%);">70</div><div class="t" style="left:1415.28px;top:937.08px;font-size:15.5px;line-height:15.5px;color:#555;transform:translateX(-50%);">80</div><div class="t" style="left:1504.84px;top:937.08px;font-size:15.5px;line-height:15.5px;color:#555;transform:translateX(-50%);">90</div><div class="t" style="left:1594.40px;top:937.08px;font-size:15.5px;line-height:15.5px;color:#555;transform:translateX(-50%);">100</div><div class="t" style="left:1683.96px;top:937.08px;font-size:15.5px;line-height:15.5px;color:#555;transform:translateX(-50%);">110</div><div class="t" style="left:1773.52px;top:937.08px;font-size:15.5px;line-height:15.5px;color:#555;transform:translateX(-50%);">120</div><div class="t" style="left:1863.08px;top:937.08px;font-size:15.5px;line-height:15.5px;color:#555;transform:translateX(-50%);">130</div><div class="t" style="left:1952.64px;top:937.08px;font-size:15.5px;line-height:15.5px;color:#555;transform:translateX(-50%);">140</div><div class="t" style="left:2042.20px;top:937.08px;font-size:15.5px;line-height:15.5px;color:#555;transform:translateX(-50%);">150</div><div class="t" style="left:2131.76px;top:937.08px;font-size:15.5px;line-height:15.5px;color:#555;transform:translateX(-50%);">160</div><div class="t" style="left:2221.32px;top:937.08px;font-size:15.5px;line-height:15.5px;color:#555;transform:translateX(-50%);">170</div><div class="t" style="left:2310.88px;top:937.08px;font-size:15.5px;line-height:15.5px;color:#555;transform:translateX(-50%);">180</div><div class="t" style="left:2400.44px;top:937.08px;font-size:15.5px;line-height:15.5px;color:#555;transform:translateX(-50%);">190</div><div class="t" style="left:2490.00px;top:937.08px;font-size:15.5px;line-height:15.5px;color:#555;transform:translateX(-50%);">200</div><div class="t" style="left:2579.56px;top:937.08px;font-size:15.5px;line-height:15.5px;color:#555;transform:translateX(-50%);">210</div><div class="t" style="left:2669.12px;top:937.08px;font-size:15.5px;line-height:15.5px;color:#555;transform:translateX(-50%);">220</div><div class="t" style="left:2758.68px;top:937.08px;font-size:15.5px;line-height:15.5px;color:#555;transform:translateX(-50%);">230</div><div class="t" style="left:2848.24px;top:937.08px;font-size:15.5px;line-height:15.5px;color:#555;transform:translateX(-50%);">240</div><div class="t" style="left:2937.80px;top:937.08px;font-size:15.5px;line-height:15.5px;color:#555;transform:translateX(-50%);">250</div><div class="t" style="left:3027.36px;top:937.08px;font-size:15.5px;line-height:15.5px;color:#555;transform:translateX(-50%);">260</div><div class="t" style="left:1817.40px;top:966.91px;font-size:17px;line-height:17px;color:#666;transform:scaleX(0.9693);">Compressed Time</div><div class="t" style="left:1553.50px;top:1013.43px;font-size:16.5px;line-height:16.5px;color:#333;font-weight:700;transform:scaleX(0.9496);">Trained envelope</div><div class="t" style="left:1738.60px;top:1013.43px;font-size:16.5px;line-height:16.5px;color:#333;font-weight:700;transform:scaleX(0.9428);">Ignored envelope</div><div class="t" style="left:1923.10px;top:1013.43px;font-size:16.5px;line-height:16.5px;color:#333;font-weight:700;transform:scaleX(0.9377);">Envelope with teaching applied</div>
</body></html>
